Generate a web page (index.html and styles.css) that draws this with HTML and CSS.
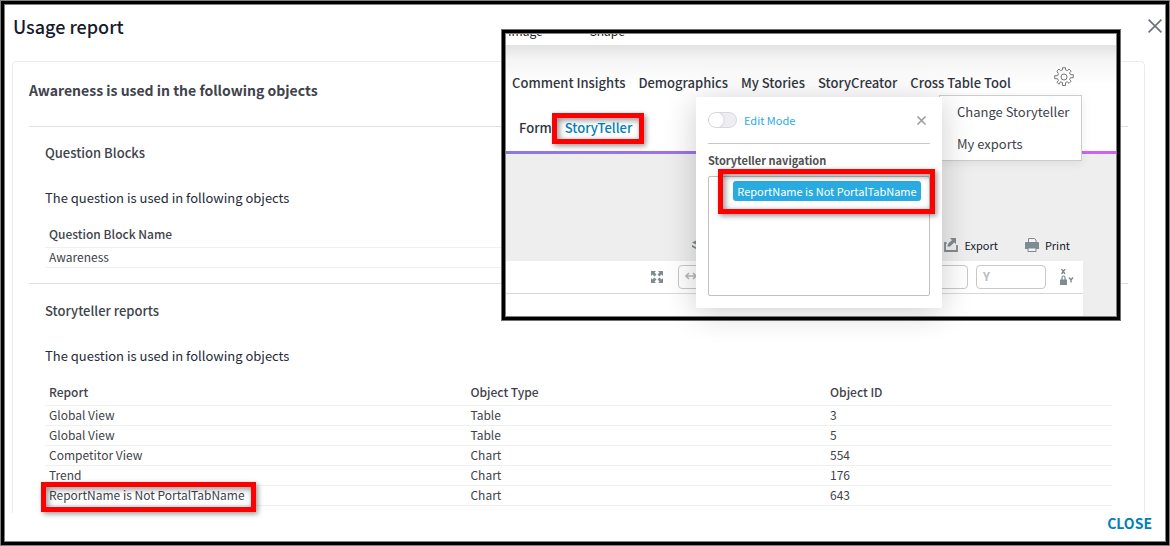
FILE: index.html
```html
<!DOCTYPE html>
<html lang="en">
<head>
<meta charset="utf-8">
<title>Usage report</title>
<link rel="stylesheet" href="styles.css">
</head>
<body>
<main class="dialog">
  <header class="dialog-head">
    <h1 class="dialog-title">Usage report</h1>
    <button class="icon-button dialog-x" aria-label="Close dialog">
      <svg width="14" height="14" viewBox="0 0 14 14" fill="none" stroke="#6b717b" stroke-width="1.6"><path d="M.6.6l12.8 12.8M13.4.6L.6 13.4"/></svg>
    </button>
  </header>

  <div class="card">
    <h2 class="card-title">Awareness is used in the following objects</h2>
    <section class="section">
      <h3 class="section-title">Question Blocks</h3>
      <p class="section-text">The question is used in following objects</p>
      <table class="grid">
        <thead><tr><th>Question Block Name</th></tr></thead>
        <tbody><tr><td>Awareness</td></tr></tbody>
      </table>
    </section>
    <section class="section">
      <h3 class="section-title">Storyteller reports</h3>
      <p class="section-text">The question is used in following objects</p>
      <table class="grid">
        <thead><tr><th class="col-report">Report</th><th class="col-type">Object Type</th><th>Object ID</th></tr></thead>
        <tbody>
          <tr><td>Global View</td><td>Table</td><td>3</td></tr>
          <tr><td>Global View</td><td>Table</td><td>5</td></tr>
          <tr><td>Competitor View</td><td>Chart</td><td>554</td></tr>
          <tr><td>Trend</td><td>Chart</td><td>176</td></tr>
          <tr><td><span class="marked">ReportName is Not PortalTabName<span class="callout callout-row"></span></span></td><td>Chart</td><td>643</td></tr>
        </tbody>
      </table>
    </section>
  </div>

  <footer class="dialog-foot">
    <button class="text-button">CLOSE</button>
  </footer>

  <aside class="inset">
    <div class="inset-view">
      <div class="top-strip"><span class="strip-item">Image</span><span class="strip-item">Shape</span></div>
      <div class="portal-head">
        <nav class="tabs">
          <a class="tab" href="#">Comment Insights</a>
          <a class="tab" href="#">Demographics</a>
          <a class="tab" href="#">My Stories</a>
          <a class="tab" href="#">StoryCreator</a>
          <a class="tab" href="#">Cross Table Tool</a>
          <button class="icon-button gear" aria-label="Settings">
            <svg width="20" height="20" viewBox="0 0 20 20" fill="none" stroke="#777" stroke-width="1"><path d="M8.5.7h3v2.100l1.900.8 1.600-1.500 2.100 2.100-1.500 1.600.8 1.900h2.900v3h-2.900l-.8 1.900 1.500 1.600-2.100 2.100-1.600-1.500-1.900.8v2.900h-3v-2.900l-1.900-.8L5 17.300 2.900 15.200l1.500-1.600-.8-1.900H.7v-3h2.900l.8-1.900L2.900 4.200 5 2.100l1.600 1.500 1.900-.8z"/><circle cx="10" cy="10" r="3"/></svg>
          </button>
        </nav>
        <nav class="tabs sub-tabs">
          <a class="tab" href="#">Form</a>
          <a class="tab active marked" href="#">StoryTeller<span class="callout callout-tab"></span></a>
        </nav>
      </div>
      <div class="canvas">
        <div class="actions">
          <svg class="layers" width="14" height="12" viewBox="0 0 14 12" fill="#7f8b92"><path d="M7 0l7 3.500L7 7 0 3.500z"/><path d="M0 6l7 3.500L14 6v2l-7 3.500L0 8z"/></svg>
          <button class="action">
            <svg width="14" height="14" viewBox="0 0 14 14"><path d="M2.500 5H1v8h12V7" fill="none" stroke="#7f8b92" stroke-width="1.800"/><path d="M6 0h6v6l-1.800-1.600L6 8.500H3.500C3.500 6 5 4 8 2.200z" fill="#7f8b92"/></svg>
            Export
          </button>
          <button class="action">
            <svg width="14" height="14" viewBox="0 0 14 14"><path d="M3.500 4.500v-4h6l1.500 1.500v2.500" fill="#f4f4f4" stroke="#7f8b92"/><path d="M0 5q0-1 1-1h12q1 0 1 1v6H0z" fill="#7f8b92"/><path d="M3 10h8v3.500H3z" fill="#f4f4f4" stroke="#7f8b92"/></svg>
            Print
          </button>
        </div>
        <div class="sheet">
          <div class="tools">
            <svg class="expand" width="12" height="12" viewBox="0 0 12 12" fill="#7f8b92"><path d="M0 0h5L3.500 1.500l2 2-2 2-2-2L0 5zM12 0v5l-1.500-1.500-2 2-2-2 2-2L7 0zM0 12V7l1.500 1.500 2-2 2 2-2 2L5 12zM12 12H7l1.500-1.500-2-2 2-2 2 2L12 7z"/></svg>
            <label class="field">
              <svg width="12" height="8" viewBox="0 0 12 8" fill="none" stroke="#b8bbbe" stroke-width="1.600"><path d="M1 4h10M4 1L1 4l3 3M8 1l3 3-3 3"/></svg>
              <input class="field-input" type="text" aria-label="Width">
            </label>
            <label class="field field-x"><input class="field-input" type="text" aria-label="X position"></label>
            <label class="field">Y<input class="field-input" type="text" aria-label="Y position"></label>
            <button class="icon-button lock" aria-label="Lock aspect">
              <svg width="14" height="16" viewBox="0 0 14 16"><path d="M1.500 0l3.500 5M5 0L1.500 5M9 8.500l2 2.500 2-2.500M11 11v2.500" fill="none" stroke="#7f8b92" stroke-width="1.400"/><path d="M2 11V8.500q0-1.500 1.500-1.500T5 8.500V11" fill="none" stroke="#7f8b92" stroke-width="1.200"/><rect y="10.500" width="7" height="5.500" fill="#7f8b92"/></svg>
            </button>
          </div>
        </div>
      </div>
    </div>

    <div class="menu">
      <a class="menu-item" href="#">Change Storyteller</a>
      <a class="menu-item" href="#">My exports</a>
    </div>

    <div class="popup">
      <div class="popup-head">
        <label class="switch"><input class="switch-input" type="checkbox">Edit Mode</label>
        <button class="icon-button" aria-label="Close panel">
          <svg width="9" height="9" viewBox="0 0 9 9" fill="none" stroke="#999" stroke-width="1.500"><path d="M.5.5l8 8M8.500.5l-8 8"/></svg>
        </button>
      </div>
      <h4 class="popup-title">Storyteller navigation</h4>
      <div class="nav-list">
        <button class="chip marked">ReportName is Not PortalTabName<span class="callout callout-chip"></span></button>
      </div>
    </div>
  </aside>
</main>
</body>
</html>
```
FILE: styles.css
```css
* { box-sizing: border-box; }
body {
  margin: 0;
  font-family: "Noto Sans CJK SC", "Noto Sans", sans-serif;
  font-size: 13px;
  line-height: 20px;
  color: #40434b;
  background: #fff;
}
h1, h2, h3, h4 { margin: 0; font-weight: 500; }
p { margin: 0; }
a { color: inherit; text-decoration: none; }
button, input { font: inherit; color: inherit; border: 0; background: none; padding: 0; margin: 0; }
svg { display: block; flex: none; }
.icon-button { display: block; flex: none; }

.dialog {
  position: relative;
  display: flex;
  flex-direction: column;
  min-height: 100vh;
  padding: 10px 24px 12px 11px;
  border: 1px solid #808080;
  box-shadow: inset 0 0 0 3px #000, inset 0 0 0 4px #808080;
}
.dialog-head { display: flex; align-items: center; justify-content: space-between; height: 30px; }
.dialog-title { margin-left: 1px; font-size: 18px; color: #151b2b; }
.dialog-x { margin-right: -17px; }

.card {
  flex: 1;
  margin-top: 20px;
  padding: 0 16px;
  border: 1px solid #ebebeb;
  border-bottom: 0;
  border-radius: 5px 5px 0 0;
}
.card-title { padding: 18px 0 26px; font-size: 14px; font-weight: 700; color: #40434b; }
.section { padding: 16px 16px 15px; border-top: 1px solid #e0e0e0; }
.section:last-child { padding-top: 17px; padding-bottom: 0; }
.section-title { font-size: 13px; }
.section-text { padding: 25px 0 12px; color: #252b38; }
.grid { width: 100%; border-collapse: collapse; font-size: 12px; line-height: 16px; }
.grid th, .grid td { text-align: left; border-bottom: 1px solid #f0f0f0; }
.grid th { padding: 6px 4px 5px; font-weight: 500; }
.grid td { padding: 1px 4px 2px; }
.col-report { width: 39.5%; }
.col-type { width: 33.7%; }

.dialog-foot { display: flex; justify-content: flex-end; margin-right: -7px; }
.text-button { font-size: 14px; font-weight: 700; color: #0080b8; }

.marked { position: relative; }
.callout {
  position: absolute;
  border: 5px solid #f00;
  box-shadow: 2px 2px 5px rgba(0, 0, 0, .4), inset 2px 2px 6px rgba(0, 0, 0, .45);
  pointer-events: none;
}
.callout-row { inset: -4px -11px -9px -8px; }
.callout-tab { inset: -5px -12px -6px -13px; }
.callout-chip { inset: -12px -14px -13px -15px; }

.inset {
  position: absolute;
  top: 28px;
  left: 500px;
  width: 620px;
  height: 292px;
  padding: 4px;
  border: 1px solid #707070;
  background: #fff;
  box-shadow: inset 0 0 0 3px #000, inset 0 0 0 4px #808080;
}
.inset-view { display: flex; flex-direction: column; height: 100%; overflow: hidden; }
.top-strip { display: flex; gap: 47px; height: 11px; padding-left: 2px; overflow: hidden; font-size: 12px; color: #222; }
.strip-item { margin-top: -13px; }
.portal-head {
  height: 109px;
  padding: 28px 0 0 6px;
  background: linear-gradient(#e2e2e2, #f4f4f4 14px, #fff 40px);
  border-bottom: 3px solid;
  border-image: linear-gradient(90deg, #8a78e8, #d060f8) 1;
}
.tabs { display: flex; gap: 13px; height: 26px; font-weight: 500; color: #303540; }
.gear { margin: -6px 0 0 30px; height: 20px; }
.sub-tabs { margin-top: 19px; padding-left: 7px; }
.tab { height: 20px; white-space: nowrap; }
.active { color: #0080b8; }
.canvas { flex: 1; padding-right: 33px; background: #eee; }
.actions { display: flex; justify-content: flex-end; align-items: center; gap: 27px; padding: 74px 13px 0 0; height: 107px; font-size: 11px; color: #151b2b; }
.action { display: flex; align-items: center; gap: 6px; }
.layers { margin-right: 211px; }
.sheet { height: 100%; background: #fff; }
.tools { display: flex; align-items: center; gap: 8px; height: 33px; padding: 0 9px 0 145px; border-bottom: 1px solid #d8d8d8; }
.expand { margin-right: 7px; }
.field { display: flex; align-items: center; width: 70px; height: 24px; padding: 0 6px 2px; border: 1px solid #c8c8c8; border-radius: 4px; font-size: 12px; font-weight: 700; color: #b8bbbe; }
.field-x { margin-left: auto; }
.field-input { min-width: 0; flex: 1; }
.lock { margin-left: 6px; }

.menu {
  position: absolute;
  top: 65px;
  left: 437px;
  padding: 0 12px 0 17px;
  border: 1px solid #ccc;
  background: #fff;
  box-shadow: 0 2px 10px rgba(0, 0, 0, .08);
  white-space: nowrap;
}
.menu-item { display: block; line-height: 32px; }

.popup {
  position: absolute;
  top: 67px;
  left: 194px;
  width: 246px;
  padding: 0 12px 12px;
  background: #fff;
  box-shadow: 0 4px 30px rgba(0, 0, 0, .2);
}
.popup-head { display: flex; align-items: center; justify-content: space-between; height: 47px; padding-right: 4px; border-bottom: 1px solid #c8c8c8; }
.switch { display: flex; align-items: center; gap: 7px; font-size: 11px; color: #29abe2; }
.switch-input {
  appearance: none;
  width: 29px;
  height: 16px;
  border: 1px solid #d8d8dc;
  border-radius: 8px;
  background: radial-gradient(circle at 7px 7px, #fff 7px, #d8d8dc 8px, #eeeef2 9px);
}
.popup-title { padding: 6px 0; font-size: 11px; font-weight: 700; color: #505050; }
.nav-list { height: 120px; padding: 4px 8px 0 24px; border: 1px solid #c0c0c0; border-radius: 2px; }
.chip { display: block; width: 100%; height: 20px; font-size: 11px; line-height: 20px; white-space: nowrap; color: #fff; background: #29abe2; border-radius: 3px; }
```
